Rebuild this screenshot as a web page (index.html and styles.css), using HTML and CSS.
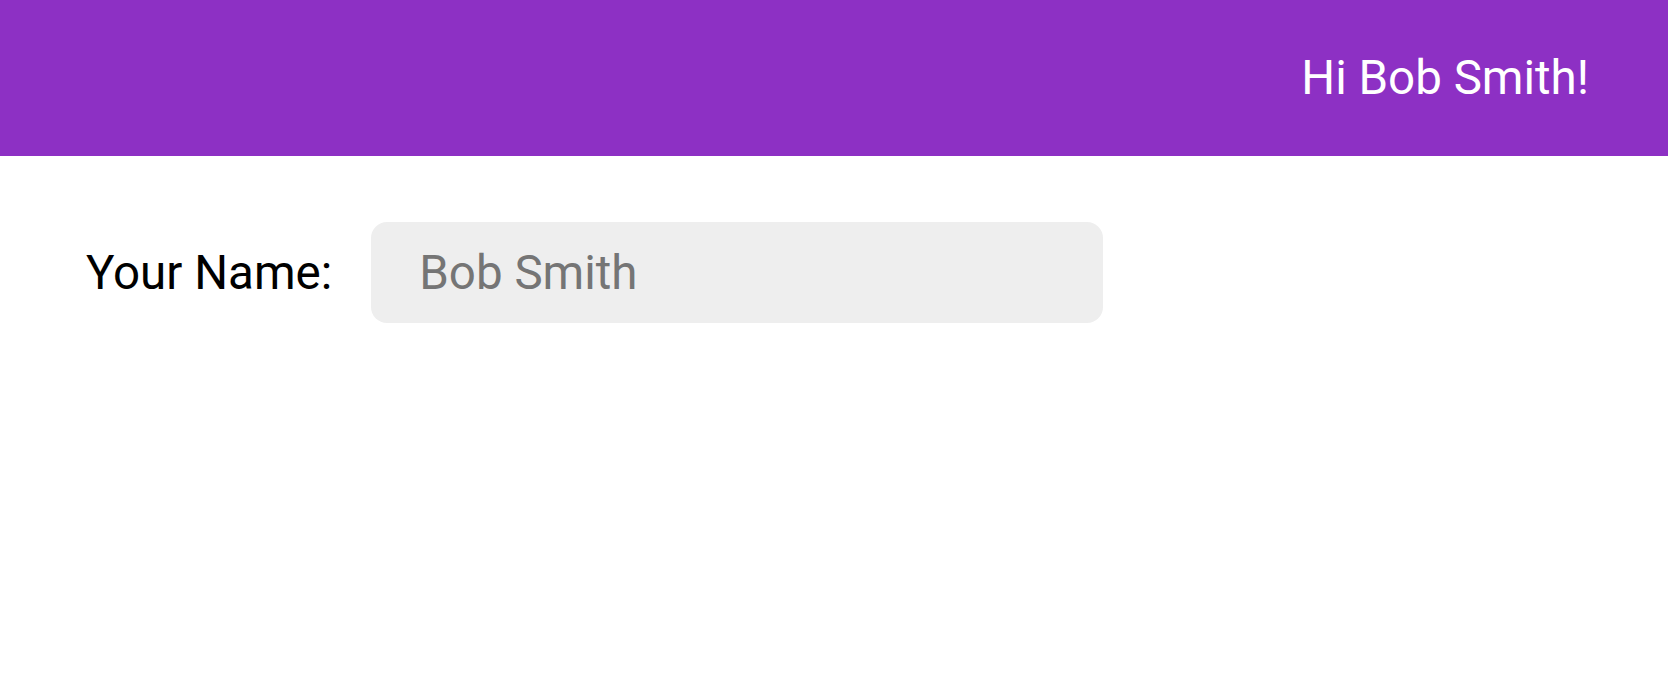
FILE: index.html
```html
<!DOCTYPE html>
<html lang="en">
<head>
<meta charset="utf-8">
<title>Greeting</title>
<link rel="stylesheet" href="styles.css">
</head>
<body>
<header class="topbar">
  <span class="greeting">Hi Bob Smith!</span>
</header>
<main class="content">
  <label class="field">
    <span class="field-label">Your Name:</span>
    <input class="field-input" type="text" value="Bob Smith">
  </label>
</main>
</body>
</html>
```
FILE: styles.css
```css
html, body {
  margin: 0;
  padding: 0;
  background: #ffffff;
  font-family: Roboto, "Liberation Sans", sans-serif;
}

.topbar {
  height: 156px;
  box-sizing: border-box;
  background: #8d30c4;
  display: flex;
  align-items: center;
  justify-content: flex-end;
  padding: 0 79px 0 0;
}

.greeting {
  color: #ffffff;
  font-size: 47.5px;
  line-height: normal;
}

.content {
  padding: 66px 86px;
}

.field {
  display: flex;
  align-items: center;
  gap: 39px;
}

.field-label {
  font-size: 47.5px;
  color: #000000;
}

.field-input {
  width: 732px;
  height: 101px;
  box-sizing: border-box;
  border: none;
  outline: none;
  border-radius: 16px;
  background: #eeeeee;
  padding: 0 48px;
  font-family: Roboto, "Liberation Sans", sans-serif;
  font-size: 47.5px;
  color: #757575;
  margin: 0;
}
```
